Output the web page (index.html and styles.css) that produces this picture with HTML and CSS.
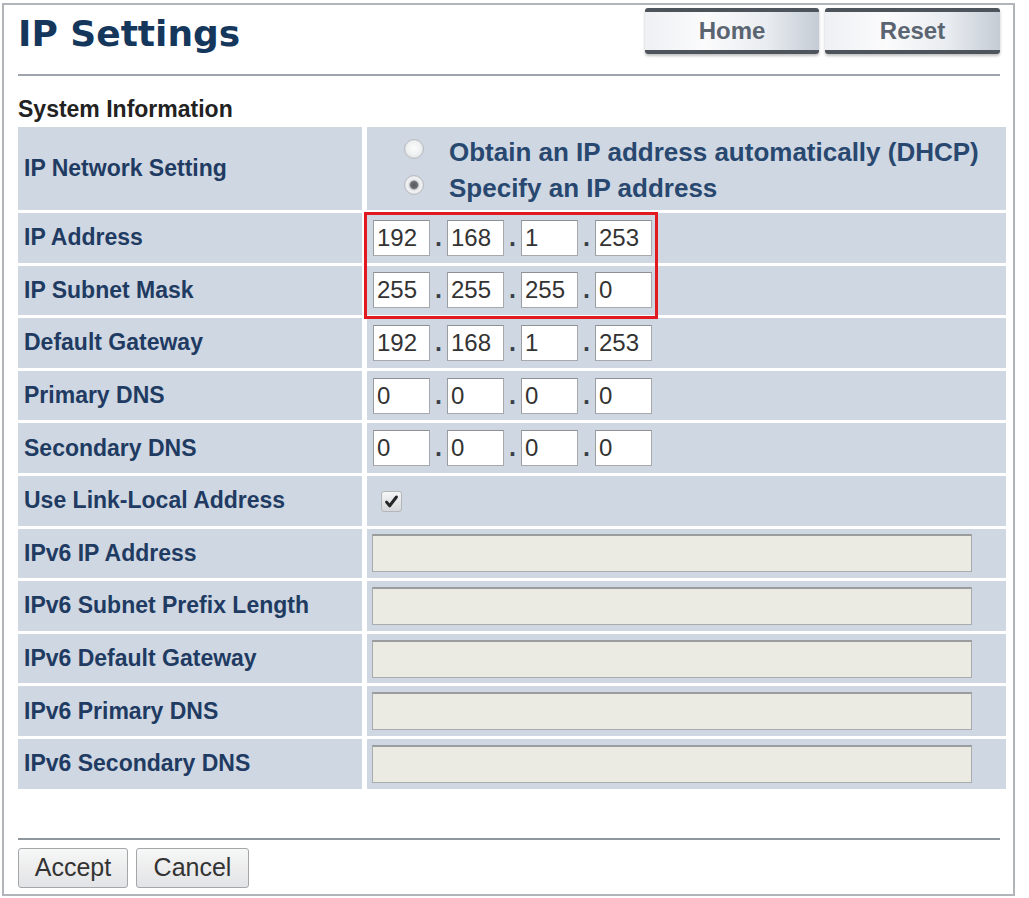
FILE: index.html
```html
<!DOCTYPE html>
<html lang="en">
<head>
<meta charset="utf-8">
<title>IP Settings</title>
<link rel="stylesheet" href="styles.css">
</head>
<body>
<div class="frame">
  <div class="header">
    <h1 class="title">IP Settings</h1>
    <div class="nav">
      <button class="nav-btn">Home</button>
      <button class="nav-btn">Reset</button>
    </div>
  </div>
  <div class="rule"></div>
  <div class="section-title">System Information</div>

  <div class="grid">
    <div class="label tall">IP Network Setting</div>
    <div class="value tall radios">
      <label class="radio-line"><span class="radio"></span><span>Obtain an IP address automatically (DHCP)</span></label>
      <label class="radio-line"><span class="radio checked"></span><span>Specify an IP address</span></label>
    </div>

    <div class="label">IP Address</div>
    <div class="value ipcell highlight-host">
      <div class="ip"><input class="oct" value="192"><span class="dot">.</span><input class="oct" value="168"><span class="dot">.</span><input class="oct" value="1"><span class="dot">.</span><input class="oct" value="253"></div>
      <div class="highlight"></div>
    </div>

    <div class="label">IP Subnet Mask</div>
    <div class="value ipcell">
      <div class="ip"><input class="oct" value="255"><span class="dot">.</span><input class="oct" value="255"><span class="dot">.</span><input class="oct" value="255"><span class="dot">.</span><input class="oct" value="0"></div>
    </div>

    <div class="label">Default Gateway</div>
    <div class="value ipcell">
      <div class="ip"><input class="oct" value="192"><span class="dot">.</span><input class="oct" value="168"><span class="dot">.</span><input class="oct" value="1"><span class="dot">.</span><input class="oct" value="253"></div>
    </div>

    <div class="label">Primary DNS</div>
    <div class="value ipcell">
      <div class="ip"><input class="oct" value="0"><span class="dot">.</span><input class="oct" value="0"><span class="dot">.</span><input class="oct" value="0"><span class="dot">.</span><input class="oct" value="0"></div>
    </div>

    <div class="label">Secondary DNS</div>
    <div class="value ipcell">
      <div class="ip"><input class="oct" value="0"><span class="dot">.</span><input class="oct" value="0"><span class="dot">.</span><input class="oct" value="0"><span class="dot">.</span><input class="oct" value="0"></div>
    </div>

    <div class="label">Use Link-Local Address</div>
    <div class="value checkcell">
      <span class="checkbox"><svg width="15" height="15" viewBox="0 0 14 14"><path d="M2.4 7.6 L5.3 11 L11.6 2.8" fill="none" stroke="#262626" stroke-width="2.8" stroke-linecap="round" stroke-linejoin="round"/></svg></span>
    </div>

    <div class="label">IPv6 IP Address</div>
    <div class="value v6cell"><input class="v6" disabled></div>

    <div class="label">IPv6 Subnet Prefix Length</div>
    <div class="value v6cell"><input class="v6" disabled></div>

    <div class="label">IPv6 Default Gateway</div>
    <div class="value v6cell"><input class="v6" disabled></div>

    <div class="label">IPv6 Primary DNS</div>
    <div class="value v6cell"><input class="v6" disabled></div>

    <div class="label">IPv6 Secondary DNS</div>
    <div class="value v6cell"><input class="v6" disabled></div>
  </div>

  <div class="rule bottom-rule"></div>
  <div class="actions">
    <button class="act accept">Accept</button>
    <button class="act cancel">Cancel</button>
  </div>
</div>
</body>
</html>
```

FILE: styles.css
```css
html, body {
  margin: 0;
  padding: 0;
  background: #ffffff;
}

body {
  font-family: "Liberation Sans", Arial, sans-serif;
}

.frame {
  margin: 3px 0 0 2px;
  width: 1009px;
  height: 889px;
  border: 2px solid #b1b5ba;
  box-sizing: content-box;
  display: flex;
  flex-direction: column;
}

.header {
  height: 69px;
  box-sizing: border-box;
  padding: 3px 13px 0 14px;
  display: flex;
  justify-content: space-between;
  align-items: flex-start;
}

.title {
  margin: 6px 0 0 0;
  font-family: "DejaVu Sans", Verdana, sans-serif;
  font-weight: bold;
  font-size: 36px;
  line-height: 40px;
  color: #15375c;
}

.nav {
  display: flex;
  gap: 6px;
}

.nav-btn {
  height: 46px;
  padding: 0;
  font-family: "Liberation Sans", Arial, sans-serif;
  font-weight: bold;
  font-size: 24px;
  color: #5a6571;
  border: none;
  border-top: 4px solid #4e545b;
  border-bottom: 4px solid #4e545b;
  border-radius: 3px;
  background: linear-gradient(to right, #eef0f3 0%, #fbfbfc 35%, #e9ecf0 70%, #c5ccd5 100%);
  box-shadow: 0 2px 3px rgba(0, 0, 0, 0.25);
}

.nav-btn:first-child { width: 174px; }
.nav-btn:last-child { width: 175px; }

.rule {
  height: 2px;
  margin: 0 13px 0 14px;
  background: #9ea5ad;
}

.section-title {
  margin: 20px 0 0 14px;
  font-weight: bold;
  font-size: 23px;
  line-height: 26px;
  color: #222222;
}

.grid {
  margin: 5px 7px 0 14px;
  display: grid;
  grid-template-columns: 344px 1fr;
  grid-template-rows: 83px repeat(11, 49.6px);
  column-gap: 5px;
  row-gap: 3px;
  background: #ffffff;
}

.label,
.value {
  background: #cfd7e2;
  display: flex;
  align-items: center;
}

.label {
  padding-left: 6px;
  font-weight: bold;
  font-size: 23px;
  color: #1f3b62;
}

.radios {
  flex-direction: column;
  align-items: flex-start;
  justify-content: center;
  padding-left: 37px;
  padding-top: 3px;
}

.radio-line {
  display: flex;
  align-items: center;
  height: 36px;
  font-weight: bold;
  font-size: 26px;
  color: #284870;
}

.radio {
  flex: none;
  margin: 0 25px 0 0;
  width: 20px;
  height: 20px;
  box-sizing: border-box;
  border-radius: 50%;
  border: 1px solid #b9bdc2;
  background: radial-gradient(circle at 50% 45%, #fbfbfb 0%, #f0f1f2 50%, #d3d6da 100%);
  box-shadow: inset 0 0 1px rgba(0, 0, 0, 0.15);
  position: relative;
  top: -3px;
}

.radio.checked {
  background: radial-gradient(circle at 50% 50%, #55595e 0, #6a6e73 3.5px, #dcdee1 5px, #f2f3f4 55%, #d1d4d8 100%);
}

.ipcell {
  padding-left: 6px;
}

.highlight-host {
  position: relative;
}

.highlight {
  position: absolute;
  left: -3px;
  top: -1px;
  width: 294px;
  height: 107px;
  border: 3px solid #e11a21;
  box-sizing: border-box;
  z-index: 1;
  pointer-events: none;
}

.ip {
  display: flex;
  align-items: baseline;
}

.oct {
  width: 57px;
  height: 36px;
  box-sizing: border-box;
  margin: 0;
  padding: 0 0 0 3px;
  border: 1px solid #a7a9ac;
  border-top-color: #8d9094;
  border-left-color: #9a9da1;
  background: #ffffff;
  font-family: "Liberation Sans", Arial, sans-serif;
  font-size: 24px;
  color: #333333;
  outline: none;
}

.dot {
  width: 17px;
  text-align: center;
  font-size: 25px;
  font-weight: bold;
  color: #3a3f47;
}

.checkcell {
  padding-left: 14px;
}

.checkbox {
  width: 21px;
  height: 21px;
  box-sizing: border-box;
  border: 1px solid #b3b6ba;
  border-radius: 3px;
  background: linear-gradient(#f6f6f6, #d5d7da);
  display: flex;
  align-items: center;
  justify-content: center;
  margin-top: 2px;
}

.v6cell {
  padding-left: 5px;
}

.v6 {
  width: 600px;
  height: 38px;
  box-sizing: border-box;
  margin: 0;
  border: 1px solid #a9abad;
  border-top: 2px solid #9a9c9e;
  background: #ebebe4;
}

.bottom-rule {
  margin-top: 49px;
  background: #8e969e;
}

.actions {
  margin: 8px 0 0 14px;
  display: flex;
  gap: 8px;
}

.act {
  height: 40px;
  padding: 0;
  font-family: "Liberation Sans", Arial, sans-serif;
  font-size: 25px;
  color: #333333;
  border: 1px solid #a4a7aa;
  border-radius: 3px;
  background: linear-gradient(#f7f7f7, #e2e3e5);
}

.accept { width: 110px; }
.cancel { width: 113px; }
```
